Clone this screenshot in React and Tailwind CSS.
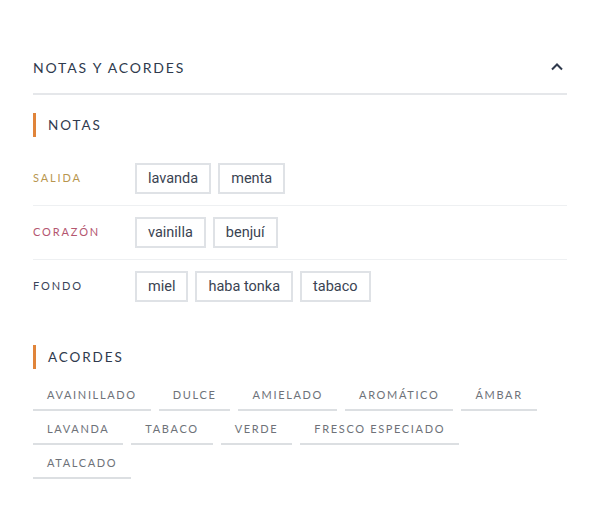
import React from "react";

const notes = [
  { label: "SALIDA", color: "text-[#b8964e]", items: ["lavanda", "menta"] },
  { label: "CORAZÓN", color: "text-[#b4566f]", items: ["vainilla", "benjuí"] },
  { label: "FONDO", color: "text-[#3a4458]", items: ["miel", "haba tonka", "tabaco"] },
];

const accords = [
  "AVAINILLADO",
  "DULCE",
  "AMIELADO",
  "AROMÁTICO",
  "ÁMBAR",
  "LAVANDA",
  "TABACO",
  "VERDE",
  "FRESCO ESPECIADO",
  "ATALCADO",
];

const SectionTitle = ({ children }) => (
  <div className="flex items-center gap-3 h-6">
    <span className="w-[3px] h-6 bg-[#e0843a]" />
    <h3 className="text-[13.5px] tracking-[0.14em] text-[#2f3a4d]">{children}</h3>
  </div>
);

export default function App() {
  return (
    <div className="bg-white w-[600px] h-[528px] px-[33px] pt-[55px] font-['Lato',sans-serif]">
      {/* Accordion header */}
      <div className="flex items-center justify-between h-6">
        <h2 className="text-[14px] tracking-[0.13em] text-[#2f3a4d]">NOTAS Y ACORDES</h2>
        <svg width="14" height="10" viewBox="0 0 14 10" className="mr-[3px]">
          <path d="M2 7.5 L7 2.5 L12 7.5" fill="none" stroke="#2f3a4d" strokeWidth="2" />
        </svg>
      </div>
      <div className="mt-[14px] h-[2px] bg-[#e5e7ea]" />

      <div className="mt-[18px]">
        <SectionTitle>NOTAS</SectionTitle>
      </div>

      <div className="mt-[15px]">
        {notes.map((row, i) => (
          <div
            key={row.label}
            className={`flex items-center py-[11px] ${i < notes.length - 1 ? "border-b border-[#eef0f2]" : ""}`}
          >
            <span className={`w-[102px] text-[11px] tracking-[0.17em] ${row.color}`}>{row.label}</span>
            <div className="flex gap-[7px]">
              {row.items.map((n) => (
                <span
                  key={n}
                  className="h-[31px] px-[11px] flex items-center border-2 border-[#dfe2e6] text-[14.5px] text-[#3a4352] font-['Roboto',sans-serif]"
                >
                  {n}
                </span>
              ))}
            </div>
          </div>
        ))}
      </div>

      <div className="mt-[32px]">
        <SectionTitle>ACORDES</SectionTitle>
      </div>

      <div className="mt-[12px] flex flex-wrap gap-x-[8px] gap-y-[4px] w-[520px]">
        {accords.map((a) => (
          <span
            key={a}
            className="h-[30px] px-[14px] flex items-center border-b-2 border-[#dcdfe2] text-[11px] tracking-[0.15em] text-[#6e7279]"
          >
            {a}
          </span>
        ))}
      </div>
    </div>
  );
}
